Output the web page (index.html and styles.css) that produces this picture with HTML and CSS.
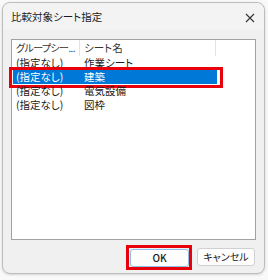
FILE: index.html
```html
<!DOCTYPE html>
<html>
<head>
    <meta charset="utf-8">
    <title>比較対象シート指定</title>
    <link rel="stylesheet" href="styles.css">
</head>
<body>
<div class="dialog">
    <div class="titlebar">
        <p class="title">比較対象シート指定</p>
        <a href="#" class="close">
            <svg width="10" height="10" viewBox="0 0 10 10">
                <path d="M1 1L9 9M9 1L1 9" stroke="#333" stroke-width="1.1" fill="none"/>
            </svg>
        </a>
    </div>
    <div class="dialog-main">
        <div class="list">
            <div class="list-head">
                <div class="col col-group">グループシー...</div>
                <div class="col col-sheet">シート名</div>
            </div>
            <div class="row">
                <div class="cell">(指定なし)</div>
                <div class="cell">作業シート</div>
            </div>
            <div class="row selected">
                <div class="cell">(指定なし)</div>
                <div class="cell">建築</div>
                <span class="mark mark-row"></span>
            </div>
            <div class="row">
                <div class="cell">(指定なし)</div>
                <div class="cell">電気設備</div>
            </div>
            <div class="row">
                <div class="cell">(指定なし)</div>
                <div class="cell">図枠</div>
            </div>
        </div>
    </div>
    <div class="dialog-footer">
        <a href="#" class="btn btn-ok">OK<span class="mark mark-btn"></span></a>
        <a href="#" class="btn btn-cancel">キャンセル</a>
    </div>
</div>
</body>
</html>
```

FILE: styles.css
```css
body{
    margin: 0;
    background: #f9f9f9;
    font-family: "Noto Sans CJK JP", "Noto Sans", sans-serif;
    font-feature-settings: "palt";
    font-size: 10.5px;
    color: #1a1a1a;
}
p{
    margin: 0;
    padding: 0;
}
a{
    text-decoration: none;
    color: #1a1a1a;
}
.dialog{
    margin: 2px;
    width: 261px;
    height: 270px;
    border: 1px solid #bcbcbc;
    border-radius: 8px;
    background: #f0f0f0;
    display: flex;
    flex-direction: column;
    box-shadow: 0 1px 3px rgba(0,0,0,0.15);
}
.titlebar{
    height: 27px;
    display: flex;
    align-items: center;
    justify-content: space-between;
    padding: 0 9px 0 8px;
    background: #f3f3f3;
    border-radius: 8px 8px 0 0;
}
.title{
    line-height: 14px;
}
.close{
    display: flex;
    width: 10px;
    height: 10px;
    margin-top: 2px;
}
.dialog-main{
    padding: 9px 8px 0;
}
.list{
    height: 199px;
    border: 1px solid #a2a2a2;
    background: #fff;
}
.list-head{
    display: flex;
    height: 16px;
    line-height: 16px;
    color: #333;
}
.list-head .col{
    border-right: 1px solid #e3e3e3;
    padding-left: 4px;
    white-space: nowrap;
    overflow: hidden;
}
.col-group{
    width: 63px;
    font-size: 10px;
    letter-spacing: -0.6px;
}
.col-sheet{
    width: 131px;
}
.row{
    position: relative;
    display: flex;
    margin-left: 1px;
    width: 204px;
    height: 14px;
    line-height: 14px;
}
.row .cell{
    padding-left: 3px;
    white-space: nowrap;
}
.row .cell:first-child{
    width: 65px;
}
.row.selected{
    background: #0078d7;
    color: #fff;
}
.mark{
    position: absolute;
    border: 3px solid #e8000b;
}
.mark-row{
    left: -4px;
    top: -3px;
    right: -6px;
    bottom: -4px;
}
.dialog-footer{
    display: flex;
    justify-content: flex-end;
    gap: 8px;
    margin-top: 8px;
    padding-right: 9px;
}
.btn{
    position: relative;
    display: block;
    height: 16px;
    line-height: 16px;
    text-align: center;
    background: #fdfdfd;
    border: 1px solid #d0d0d0;
    border-radius: 3px;
    font-size: 10px;
}
.btn-ok{
    width: 57px;
    border-color: #8fbfea;
    font-weight: 500;
    margin-top: 1px;
}
.btn-cancel{
    width: 56px;
}
.mark-btn{
    left: -5px;
    top: -5px;
    right: -4px;
    bottom: -4px;
}
```
